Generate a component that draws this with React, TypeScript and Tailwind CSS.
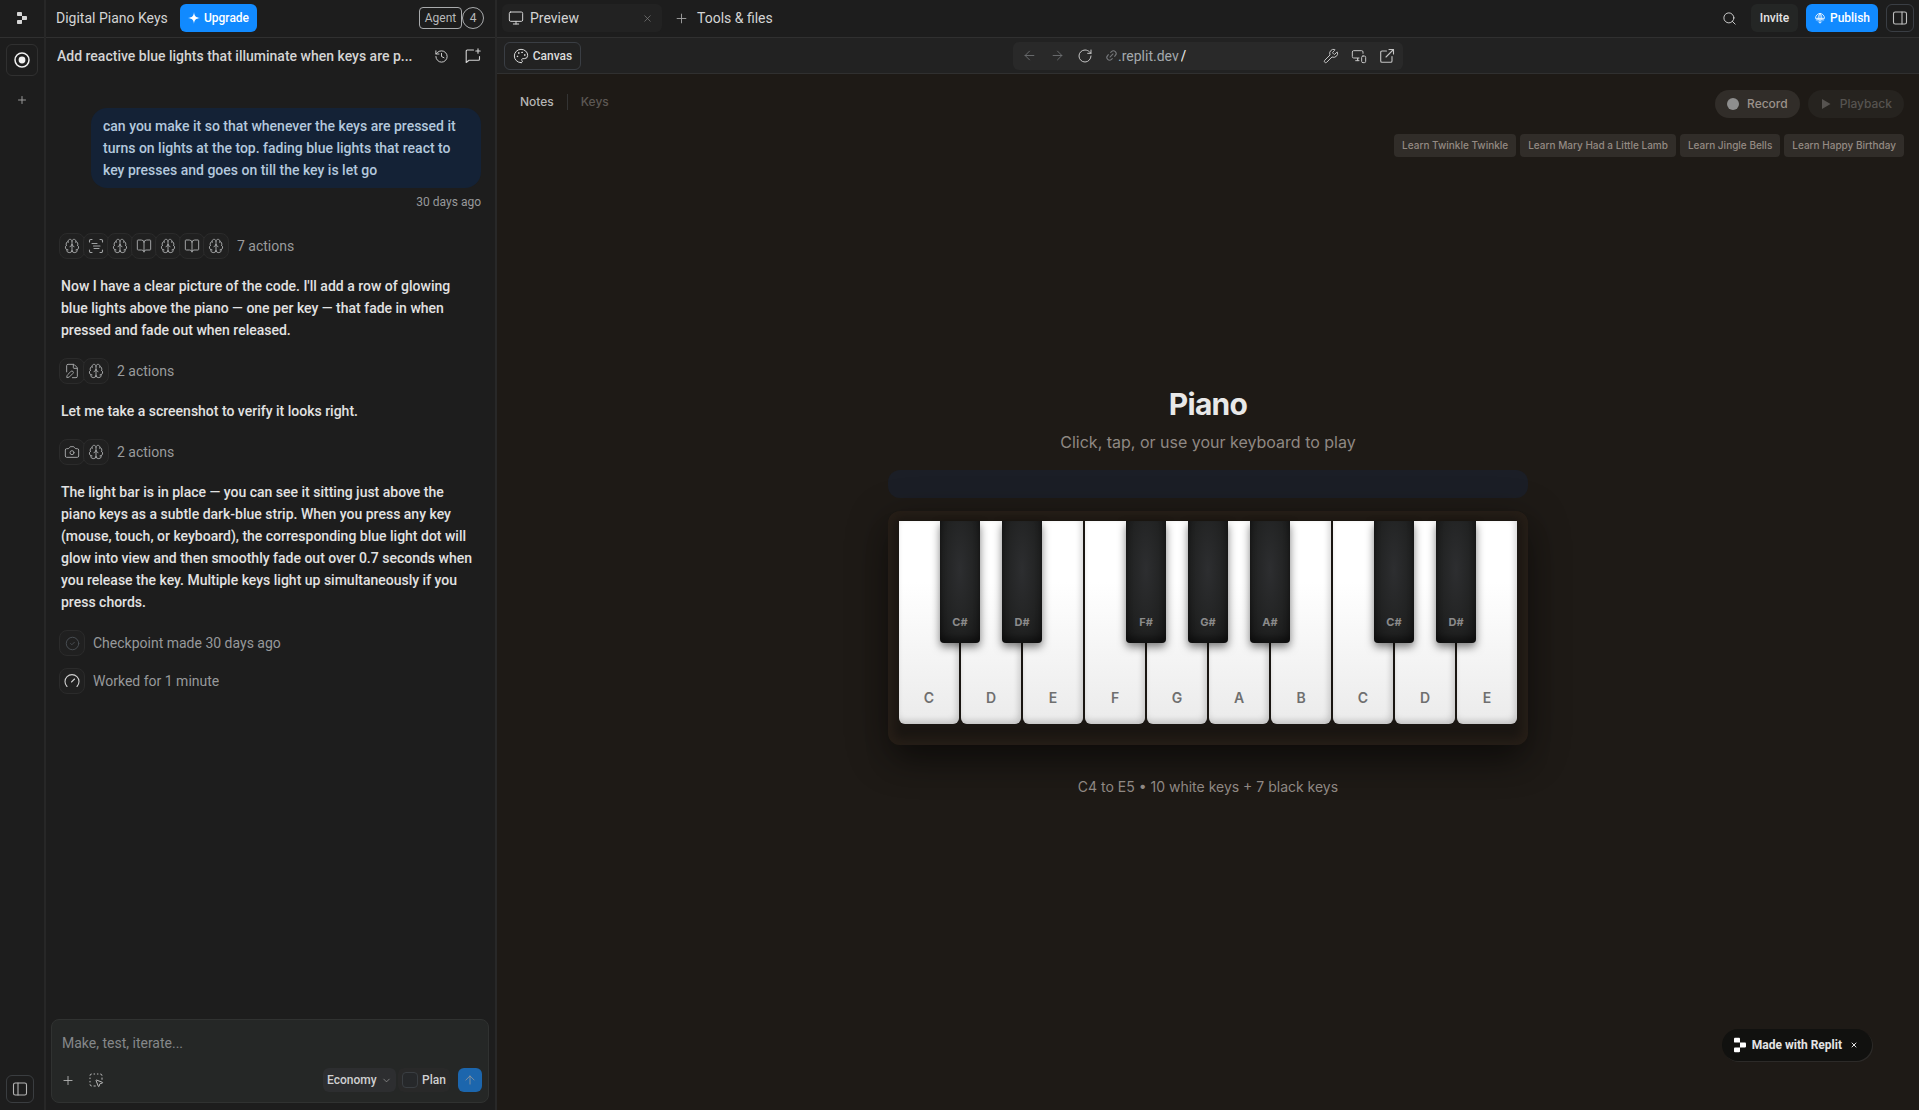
import type { ReactNode } from 'react';
import {
  ArrowLeft, ArrowRight, ArrowUp, BookOpen, Brain, Camera, ChevronDown, CircleCheck, FilePen,
  History, Link2, Monitor, MonitorSmartphone, Palette, Plus, RotateCw, Search,
  SquareDashedMousePointer, Wrench, X,
} from 'lucide-react';

type Icon = React.ComponentType<{ size?: number; strokeWidth?: number; className?: string }>;

const WHITE_KEYS = [
  { note: 'C', sharp: 'C#' },
  { note: 'D', sharp: 'D#' },
  { note: 'E' },
  { note: 'F', sharp: 'F#' },
  { note: 'G', sharp: 'G#' },
  { note: 'A', sharp: 'A#' },
  { note: 'B' },
  { note: 'C', sharp: 'C#' },
  { note: 'D', sharp: 'D#' },
  { note: 'E' },
];

const SONGS = ['Twinkle Twinkle', 'Mary Had a Little Lamb', 'Jingle Bells', 'Happy Birthday'];

function ReplitLogo({ className }: { className?: string }) {
  return (
    <svg viewBox="7 4 20 24" fill="currentColor" className={className}>
      <path d="M7 5.5C7 4.67 7.67 4 8.5 4h7c.83 0 1.5.67 1.5 1.5V12H8.5C7.67 12 7 11.33 7 10.5z" />
      <path d="M17 12h8.5c.83 0 1.5.67 1.5 1.5v5c0 .83-.67 1.5-1.5 1.5H17z" />
      <path d="M7 21.5c0-.83.67-1.5 1.5-1.5H17v6.5c0 .83-.67 1.5-1.5 1.5h-7c-.83 0-1.5-.67-1.5-1.5z" />
    </svg>
  );
}

function Stroke({ size = 16, children }: { size?: number; children: ReactNode }) {
  return (
    <svg width={size} height={size} viewBox="0 0 16 16" fill="none" stroke="currentColor" strokeWidth="1.1" strokeLinecap="round" strokeLinejoin="round">
      {children}
    </svg>
  );
}

function NewChatIcon() {
  return (
    <Stroke>
      <path d="M8.5 2H2.2a1 1 0 0 0-1 1v11.5L4 12.2h9.5a1 1 0 0 0 1-1V8.5" />
      <path d="M13 .8v4.4M10.8 3h4.4" />
    </Stroke>
  );
}

function ScanIcon() {
  return (
    <Stroke>
      <path d="M1.5 4V2.800a1.300 1.300 0 0 1 1.300-1.300H4M12 1.500h1.200a1.300 1.300 0 0 1 1.300 1.300V4M14.500 12v1.200a1.300 1.300 0 0 1-1.300 1.300H12M4 14.500H2.800a1.300 1.300 0 0 1-1.300-1.300V12" />
      <path d="M4 5.500h5M5.500 8h6.500M6 10.500h5" />
    </Stroke>
  );
}

function GaugeIcon() {
  return (
    <Stroke>
      <path d="M3 13.5a7 7 0 1 1 10 0" />
      <path d="M7.5 9 10.5 6" />
    </Stroke>
  );
}

function PopOutIcon() {
  return (
    <Stroke>
      <path d="M7.5 3H3a1.3 1.3 0 0 0-1.3 1.3V13A1.3 1.3 0 0 0 3 14.3h8.7A1.3 1.3 0 0 0 13 13V8.5" />
      <path d="M10 1.5h4.5V6M14.5 1.5 7 9" />
    </Stroke>
  );
}

function PanelIcon({ side }: { side: 'left' | 'right' }) {
  return (
    <Stroke>
      <rect x="1.5" y="2" width="13" height="12" rx="1.8" />
      <path d={side === 'left' ? 'M6 2v12' : 'M10 2v12'} />
    </Stroke>
  );
}

function GlobeIcon() {
  return (
    <Stroke size={12}>
      <path d="M2 8a6 6 0 0 1 12 0zM8 2v12M8 2C5.5 4 5.5 8 5.5 10M8 2c2.5 2 2.5 6 2.5 8M3 10.5h10M6 13l2 2 2-2" />
    </Stroke>
  );
}

function ActionBadge({ children, className = 'text-[#a0a2a3]' }: { children: ReactNode; className?: string }) {
  return (
    <span className={`flex size-[26px] shrink-0 items-center justify-center rounded-lg border border-[#2b2b2b] bg-[#202020] ${className}`}>
      {children}
    </span>
  );
}

function Actions({ icons }: { icons: Icon[] }) {
  return (
    <div className="flex items-center gap-2 text-[#9a9b9c]">
      <div className="flex -space-x-0.5">
        {icons.map((Glyph, i) => (
          <ActionBadge key={i}><Glyph size={16} strokeWidth={1.5} /></ActionBadge>
        ))}
      </div>
      {icons.length} actions
    </div>
  );
}

function Rail() {
  return (
    <nav className="flex w-[46px] shrink-0 flex-col items-center border-r-2 border-[#272727]">
      <a href="#home" aria-label="Home" className="flex h-[38px] w-full items-center justify-center border-b border-[#303030] pb-px">
        <ReplitLogo className="h-3 w-2.5 text-[#d5d5d5]" />
      </a>
      <button aria-label="Current thread" className="mt-1.5 flex size-8 items-center justify-center rounded-md border border-[#303030] text-[#f0f0f0]">
        <svg width="16" height="16" viewBox="0 0 16 16" fill="none" stroke="currentColor" strokeWidth="1.5">
          <circle cx="8" cy="8" r="7" />
          <circle cx="8" cy="8" r="3.4" fill="currentColor" stroke="none" />
        </svg>
      </button>
      <button aria-label="New thread" className="mt-4 flex size-4 items-center justify-center text-[#9a9a9a]">
        <Plus size={12} strokeWidth={2} />
      </button>
      <button aria-label="Toggle sidebar" className="mt-auto mb-[7px] mr-1 flex size-7 items-center justify-center rounded-md border border-[#3a3d40] text-[#b5b5b5]">
        <PanelIcon side="left" />
      </button>
    </nav>
  );
}

function ChatPanel() {
  return (
    <section className="flex w-[451px] shrink-0 flex-col border-r-2 border-[#282828]">
      <header className="flex h-[38px] shrink-0 items-center border-b border-[#303030] pr-[11px] pb-px pl-2.5 text-sm">
        <h1 className="w-28 text-[#d4d4d4]">Digital Piano Keys</h1>
        <button className="ml-3 flex h-7 w-[77px] items-center justify-center gap-1 rounded-md bg-[#118aff] text-xs font-medium text-white">
          <svg width="12" height="12" viewBox="0 0 12 12" fill="currentColor">
            <path d="M6 0c.4 4 1.5 5.4 6 6-4.5.6-5.6 2-6 6-.4-4-1.5-5.4-6-6 4.5-.6 5.6-2 6-6z" />
          </svg>
          Upgrade
        </button>
        <button className="ml-auto flex h-[22px] w-[43px] items-center justify-center rounded-sm border border-[#a9abad] text-xs text-[#b8b9ba]">Agent</button>
        <span className="flex size-[22px] items-center justify-center rounded-full border border-[#a9abad] text-xs text-[#b8b9ba]">4</span>
      </header>

      <div className="flex h-9 shrink-0 items-center pr-3.5 pl-[11px] text-sm text-[#d4d4d4]">
        <h2 className="truncate font-medium">Add reactive blue lights that illuminate when keys are p...</h2>
        <button aria-label="History" className="ml-auto flex size-4 shrink-0 items-center justify-center"><History size={15} strokeWidth={1.5} /></button>
        <button aria-label="New chat" className="ml-4 flex size-4 shrink-0 items-center justify-center"><NewChatIcon /></button>
      </div>

      <div className="flex flex-1 flex-col gap-4 pt-[34px] pr-3.5 pl-[13px] text-sm leading-[22px] text-[#e2e2e2]">
        <div className="flex flex-col items-end pb-[3px]">
          <p className="w-[390px] rounded-2xl bg-[#142236] px-3 py-[7px] font-medium text-[#b3c8dd]">
            can you make it so that whenever the keys are pressed it<br />
            turns on lights at the top. fading blue lights that react to<br />
            key presses and goes on till the key is let go
          </p>
          <time className="mt-0.5 text-xs leading-6 text-[#97999b]">30 days ago</time>
        </div>
        <Actions icons={[Brain, ScanIcon, Brain, BookOpen, Brain, BookOpen, Brain]} />
        <p className="px-0.5 pb-px font-medium">
          Now I have a clear picture of the code. I'll add a row of glowing<br />
          blue lights above the piano — one per key — that fade in when<br />
          pressed and fade out when released.
        </p>
        <Actions icons={[FilePen, Brain]} />
        <p className="px-0.5 pb-px font-medium">Let me take a screenshot to verify it looks right.</p>
        <Actions icons={[Camera, Brain]} />
        <p className="px-0.5 pb-px font-medium">
          The light bar is in place — you can see it sitting just above the<br />
          piano keys as a subtle dark-blue strip. When you press any key<br />
          (mouse, touch, or keyboard), the corresponding blue light dot will<br />
          glow into view and then smoothly fade out over 0.7 seconds when<br />
          you release the key. Multiple keys light up simultaneously if you<br />
          press chords.
        </p>
        <div className="flex flex-col gap-3 text-[#97999b]">
          <div className="flex items-center gap-2">
            <ActionBadge className="text-[#4a4f54]"><CircleCheck size={15} strokeWidth={1.5} /></ActionBadge>
            Checkpoint made 30 days ago
          </div>
          <div className="flex items-center gap-2">
            <ActionBadge className="text-[#d0d0d0]"><GaugeIcon /></ActionBadge>
            Worked for 1 minute
          </div>
        </div>
      </div>

      <form className="mr-1.5 mb-[7px] ml-[5px] rounded-lg border border-[#303231] bg-[#252726] px-1.5 pt-3 pb-2.5">
        <textarea
          aria-label="Message"
          rows={1}
          placeholder="Make, test, iterate..."
          className="block h-[22px] w-full resize-none bg-transparent px-1 text-sm leading-[22px] outline-none placeholder:text-[#85888a]"
        />
        <div className="mt-3.5 flex h-6 items-center pl-[3px] text-xs text-[#d0d0d0]">
          <button type="button" aria-label="Attach" className="flex size-3.5 items-center justify-center text-[#b8b8b8]"><Plus size={15} strokeWidth={1.5} /></button>
          <button type="button" aria-label="Select element" className="ml-[13px] text-[#b8b8b8]"><SquareDashedMousePointer size={16} strokeWidth={1.5} /></button>
          <div className="relative ml-auto">
            <select aria-label="Mode" className="h-6 w-[73px] appearance-none rounded-md bg-[#2d2e30] pl-1 font-medium outline-none">
              <option>Economy</option>
            </select>
            <ChevronDown size={11} strokeWidth={1.5} className="pointer-events-none absolute top-[7px] right-1 text-[#a0a0a0]" />
          </div>
          <label className="ml-0.5 flex h-6 w-[52px] items-center gap-1 rounded-md bg-[#292929] pl-1 font-medium">
            <input type="checkbox" className="size-4 shrink-0 appearance-none rounded-sm border border-[#3a3e42] bg-[#26282a]" />
            Plan
          </label>
          <button type="submit" aria-label="Send" className="ml-2 flex size-6 items-center justify-center rounded-md bg-[#1c66ad] text-[#8d959d]">
            <ArrowUp size={14} strokeWidth={1.5} />
          </button>
        </div>
      </form>
    </section>
  );
}

function BrowserBar() {
  return (
    <div className="grid h-9 shrink-0 grid-cols-[1fr_390px_1fr] items-center border-b border-[#303030] bg-[#222222] px-[7px]">
      <button className="flex h-7 w-[77px] items-center justify-center gap-1 rounded-md border border-[#3a3e44] text-xs font-medium text-[#dcdcdc]">
        <Palette size={16} strokeWidth={1.5} />
        Canvas
      </button>
      <div className="flex h-7 items-center rounded-md bg-[#292929] px-2 text-sm text-[#c4c4c4]">
        <button aria-label="Back" className="flex size-4 items-center justify-center text-[#6c6e70]"><ArrowLeft size={15} strokeWidth={1.5} /></button>
        <button aria-label="Forward" className="ml-3 flex size-4 items-center justify-center text-[#6c6e70]"><ArrowRight size={15} strokeWidth={1.5} /></button>
        <button aria-label="Reload" className="ml-3"><RotateCw size={16} strokeWidth={1.5} /></button>
        <Link2 size={13} strokeWidth={2} className="ml-3 -rotate-45 text-[#75777a]" />
        <label htmlFor="path" className="text-[#a4a9ad]">.replit.dev</label>
        <input id="path" defaultValue="/" className="ml-0.5 w-0 flex-1 bg-transparent font-medium text-[#dcdcdc] outline-none" />
        <button aria-label="Developer tools"><Wrench size={16} strokeWidth={1.5} /></button>
        <button aria-label="Device size" className="ml-3"><MonitorSmartphone size={16} strokeWidth={1.5} /></button>
        <button aria-label="Open in new tab" className="ml-3"><PopOutIcon /></button>
      </div>
    </div>
  );
}

function WorkspaceTabs() {
  return (
    <header className="flex h-[38px] shrink-0 items-center border-b border-[#303030] px-[5px] pb-px text-sm text-[#d4d4d4]">
      <div className="flex h-7 w-40 items-center rounded-md bg-[#222222] px-1.5">
        <button className="flex items-center gap-1.5"><Monitor size={16} strokeWidth={1.5} /> Preview</button>
        <button aria-label="Close tab" className="mr-[3px] ml-auto text-[#808080]"><X size={11} strokeWidth={1.5} /></button>
      </div>
      <button className="ml-3 flex items-center gap-2"><Plus size={15} strokeWidth={1.5} className="text-[#a0a0a0]" /> Tools &amp; files</button>
      <button aria-label="Search" className="ml-auto"><Search size={15} strokeWidth={1.5} /></button>
      <button className="ml-3.5 h-7 w-[47px] rounded-md bg-[#242625] text-xs font-medium text-[#e4e4e4]">Invite</button>
      <button className="ml-2 flex h-7 w-[72px] items-center justify-center gap-1 rounded-md bg-[#118aff] text-xs font-medium text-white">
        <GlobeIcon />
        Publish
      </button>
      <button aria-label="Toggle right panel" className="ml-2 flex size-7 items-center justify-center rounded-md border border-[#3a3e44] text-[#c0c0c0]">
        <PanelIcon side="right" />
      </button>
    </header>
  );
}

function Keyboard() {
  return (
    <div className="w-full rounded-xl bg-[#1a1612] px-[11px] pt-2.5 pb-[21px] shadow-[0_10px_40px_rgba(0,0,0,0.4),0_20px_30px_-8px_rgba(0,0,0,0.3),inset_0_0_10px_6px_#261e17]">
      <div className="flex gap-0.5">
        {WHITE_KEYS.map(({ note, sharp }, i) => (
          <div key={i} className="relative h-[203px] flex-1">
            <button className="flex size-full items-end justify-center rounded-b-md bg-linear-to-b from-white from-30% to-[#ebebeb] pb-4 text-sm font-semibold text-[#6f6f6f] shadow-[inset_-2px_-3px_6px_rgba(0,0,0,0.18)]">
              {note}
            </button>
            {sharp && (
              <button className="absolute top-0 -right-[21px] z-10 flex h-[122px] w-10 items-end justify-center rounded-b-sm bg-[radial-gradient(ellipse_at_50%_40%,#2d2e30_0%,#212222_60%,#151515_100%)] pb-[13px] text-[11px] font-bold text-[#8b8b8b] shadow-[0_4px_8px_rgba(0,0,0,0.5),inset_0_-6px_6px_rgba(0,0,0,0.4)]">
                {sharp}
              </button>
            )}
          </div>
        ))}
      </div>
    </div>
  );
}

function PianoPreview() {
  return (
    <div className="relative flex flex-1 flex-col items-center justify-center bg-[#1e1a16] pb-px font-[Inter,sans-serif]">
      <div className="absolute inset-x-0 top-0 flex justify-between pt-4 pr-[15px] pl-[23px]">
        <div className="flex h-6 items-center text-xs font-medium">
          <button className="text-[#b5b5b5]">Notes</button>
          <span className="mx-[13px] h-4 w-px bg-[#343434]" />
          <button className="text-[#5c5753]">Keys</button>
        </div>
        <div className="flex flex-col items-end gap-4">
          <div className="flex gap-2 text-xs font-medium">
            <button className="flex h-7 items-center gap-2 rounded-full bg-[#312d29] px-3 text-[#9b928b]">
              <span className="size-3 rounded-full bg-[#8e8e8e]" />
              Record
            </button>
            <button className="flex h-7 items-center gap-2 rounded-full bg-[#26231f] px-3 text-[#565350]">
              <svg width="12" height="12" viewBox="0 0 12 12" fill="currentColor"><path d="M2 1v10l8.5-5z" /></svg>
              Playback
            </button>
          </div>
          <div className="flex gap-1 text-[10px] font-medium text-[#948a83]">
            {SONGS.map((song) => (
              <button key={song} className="h-[23px] rounded-sm bg-[#312d29] px-2">Learn {song}</button>
            ))}
          </div>
        </div>
      </div>

      <h2 className="text-3xl leading-9 font-bold tracking-tight text-[#e8e8e8]">Piano</h2>
      <p className="mt-2 text-base text-[#8f8883]">Click, tap, or use your keyboard to play</p>
      <div className="mt-4 flex w-full max-w-[640px] flex-col gap-[13px]">
        <div className="h-7 rounded-xl bg-[#1b1e26]" />
        <Keyboard />
      </div>
      <p className="mt-8 text-sm text-[#8f8883]">C4 to E5 • 10 white keys + 7 black keys</p>

      <div className="absolute right-[47px] bottom-[49px] flex h-8 items-center rounded-full bg-[#11110f] px-3 font-[Roboto,sans-serif] text-xs font-bold text-[#e4e4e4] shadow-[1px_1px_0_#2c2a28]">
        <ReplitLogo className="h-4 w-3 text-white" />
        <a href="#replit" className="ml-1.5">Made with Replit</a>
        <button aria-label="Dismiss" className="ml-1.5 flex size-3 items-center justify-center"><X size={8} strokeWidth={3} /></button>
      </div>
    </div>
  );
}

export default function App() {
  return (
    <div className="flex h-screen bg-[#1d1d1d] font-[Roboto,sans-serif]">
      <Rail />
      <ChatPanel />
      <main className="flex min-w-0 flex-1 flex-col">
        <WorkspaceTabs />
        <BrowserBar />
        <PianoPreview />
      </main>
    </div>
  );
}
